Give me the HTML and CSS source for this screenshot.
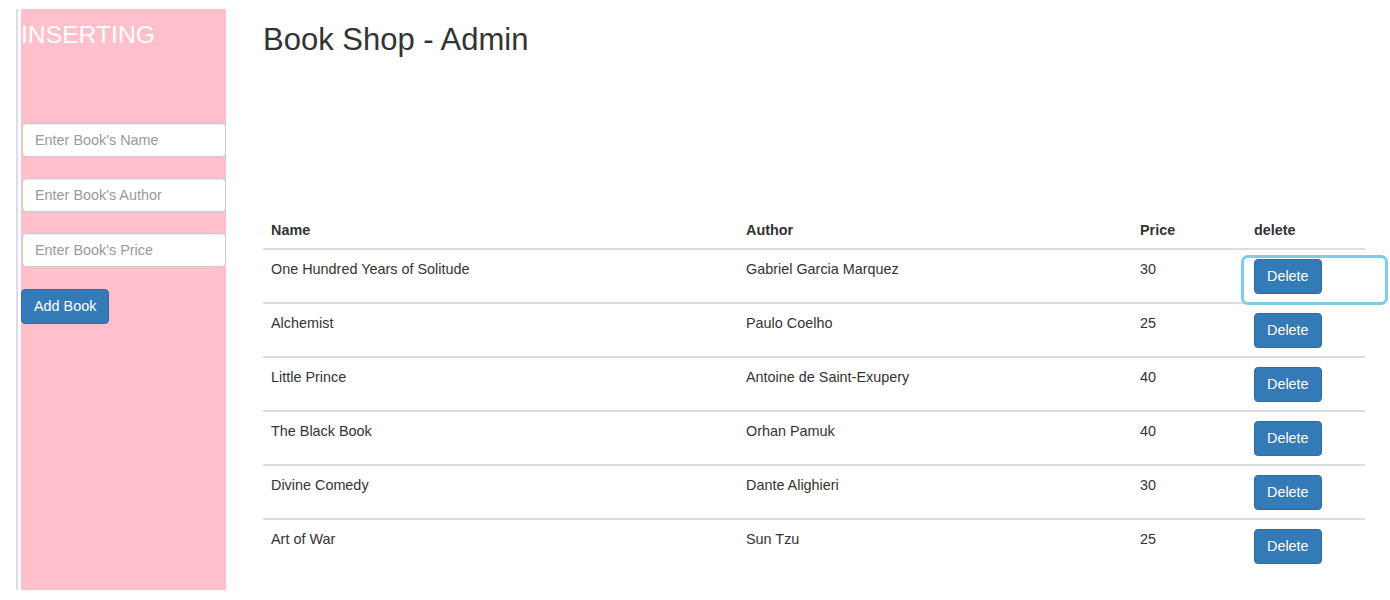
FILE: index.html
```html
<!DOCTYPE html>
<html>
<head>
<meta charset="utf-8">
<title>Book Shop - Admin</title>
<link rel="stylesheet" href="styles.css">
</head>
<body>
<div class="page">
  <div class="rail">
    <aside class="sidebar">
      <h3 class="side-title">INSERTING</h3>
      <form class="insert-form">
        <input class="form-control" type="text" placeholder="Enter Book's Name">
        <input class="form-control" type="text" placeholder="Enter Book's Author">
        <input class="form-control" type="text" placeholder="Enter Book's Price">
        <button class="btn btn-primary add-btn" type="button">Add Book</button>
      </form>
    </aside>
  </div>
  <main class="main">
    <h2 class="title">Book Shop - Admin</h2>
    <table class="books">
      <colgroup>
        <col class="c-name"><col class="c-author"><col class="c-price"><col class="c-del">
      </colgroup>
      <thead>
        <tr><th>Name</th><th>Author</th><th>Price</th><th>delete</th></tr>
      </thead>
      <tbody>
        <tr><td>One Hundred Years of Solitude</td><td>Gabriel Garcia Marquez</td><td>30</td><td class="del-cell focused"><button class="btn btn-primary" type="button">Delete</button></td></tr>
        <tr><td>Alchemist</td><td>Paulo Coelho</td><td>25</td><td class="del-cell"><button class="btn btn-primary" type="button">Delete</button></td></tr>
        <tr><td>Little Prince</td><td>Antoine de Saint-Exupery</td><td>40</td><td class="del-cell"><button class="btn btn-primary" type="button">Delete</button></td></tr>
        <tr><td>The Black Book</td><td>Orhan Pamuk</td><td>40</td><td class="del-cell"><button class="btn btn-primary" type="button">Delete</button></td></tr>
        <tr><td>Divine Comedy</td><td>Dante Alighieri</td><td>30</td><td class="del-cell"><button class="btn btn-primary" type="button">Delete</button></td></tr>
        <tr><td>Art of War</td><td>Sun Tzu</td><td>25</td><td class="del-cell"><button class="btn btn-primary" type="button">Delete</button></td></tr>
      </tbody>
    </table>
  </main>
</div>
</body>
</html>
```
FILE: styles.css
```css
* { box-sizing: border-box; }
html, body { margin: 0; padding: 0; background: #fff; }
body {
  font-family: "Liberation Sans", Arial, Helvetica, sans-serif;
  font-size: 14.4px;
  line-height: 20px;
  color: #333;
  overflow: hidden;
}
.page {
  display: flex;
  align-items: flex-start;
  padding: 9px 0 0 16px;
}
.rail {
  border-left: 2px solid #dcdcea;
  padding-left: 3px;
  height: 581px;
  flex: none;
}
.sidebar {
  width: 205px;
  height: 581px;
  background: #ffc0cb;
  display: flex;
  flex-direction: column;
}
.side-title {
  margin: 13px 0 0 0;
  font-size: 24.7px;
  line-height: 26px;
  font-weight: 400;
  color: #fff;
}
.insert-form {
  margin-top: 75px;
  display: flex;
  flex-direction: column;
  align-items: flex-start;
}
.form-control {
  display: block;
  width: 204px;
  height: 34px;
  margin: 0 0 21px 1px;
  padding: 6px 12px;
  font-family: inherit;
  font-size: 14.4px;
  color: #555;
  background: #fff;
  border: 1px solid #ccc;
  border-radius: 4px;
  box-shadow: inset 0 1px 1px rgba(0,0,0,.075);
}
.form-control::placeholder { color: #999; }
.btn {
  display: inline-block;
  height: 35px;
  padding: 6px 12px;
  font-family: inherit;
  font-size: 14.4px;
  line-height: 21px;
  border: 1px solid transparent;
  border-radius: 4px;
  cursor: pointer;
}
.btn-primary {
  color: #fff;
  background: #337ab7;
  border-color: #2e6da4;
}
.add-btn { margin-top: 1px; }
.main {
  margin-left: 37px;
  width: 1102px;
  flex: none;
}
.title {
  margin: 14px 0 0 0;
  font-size: 31px;
  line-height: 33px;
  font-weight: 400;
  color: #333;
}
.books {
  margin-top: 156px;
  width: 1102px;
  border-collapse: collapse;
  table-layout: fixed;
}
.c-name { width: 475px; }
.c-author { width: 394px; }
.c-price { width: 114px; }
.c-del { width: 119px; }
.books th {
  text-align: left;
  font-weight: 700;
  padding: 8px 8px;
  border-bottom: 2px solid #ddd;
}
.books td {
  padding: 9px 8px 8px 8px;
  vertical-align: top;
  border-top: 2px solid #ddd;
}
.books tbody tr:first-child td { border-top: 0; }
.del-cell { position: relative; }
.focused::after {
  content: "";
  position: absolute;
  left: -5px;
  top: 5px;
  width: 141px;
  height: 44px;
  border: 3px solid #7fcbea;
  border-radius: 7px;
  pointer-events: none;
}
```
